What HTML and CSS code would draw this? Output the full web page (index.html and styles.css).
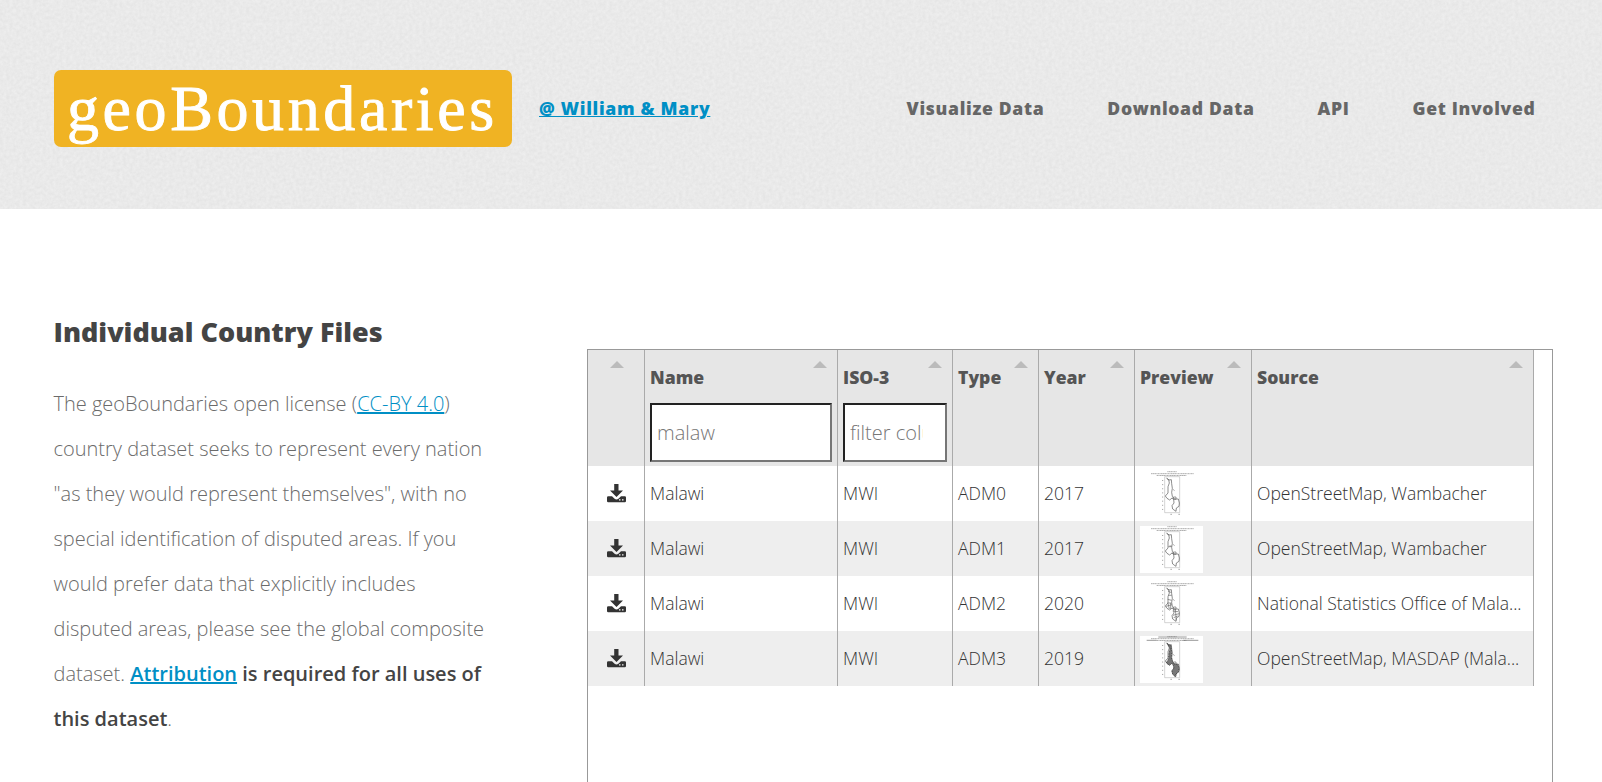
FILE: index.html
```
<!DOCTYPE html>
<html lang="en">
<head>
<meta charset="utf-8">
<title>geoBoundaries</title>
<link rel="stylesheet" href="styles.css">
</head>
<body>
<svg class="defs" aria-hidden="true">
  <symbol id="download" viewBox="0 0 19 19">
    <path d="M7.2 0h4.3v6.6H16L9.5 13 3 6.600h4.200z"/>
    <path fill-rule="evenodd" d="M1.200 12.200H5l2.600 2.600q1.900 1.500 3.800 0l2.600-2.600h3.800q1.200 0 1.200 1.200v3.600q0 1.200-1.200 1.200H1.200Q0 18.200 0 17v-3.600q0-1.200 1.200-1.200zM12 15.200v1.300h1.500v-1.300zM15 15.200v1.300h1.500v-1.300z"/>
  </symbol>
  <symbol id="malawi" viewBox="0 0 189 141">
    <rect width="189" height="141" fill="#fff"/>
    <g fill="none" stroke="#888" stroke-width="2">
      <path d="M82 2H110" stroke-dasharray="4 1"/>
      <path d="M33 8H161M50 13.500H140" stroke-dasharray="5 1 3 1"/>
      <path stroke="#aaa" stroke-width="1.500" d="M74 17H119V125H74z"/>
      <path stroke="#999" stroke-width="3" stroke-dasharray="3 9.400" d="M68 27V125"/>
      <path d="M91 130h5M115 130h5M99 55l5 4"/>
    </g>
    <path fill="none" stroke="#555" stroke-width="2" stroke-linejoin="round" d="M80 22l7 5 7-1 1 12 2 14-2 12 2 12 6 8 12 0 3 12-1 10-8 5-1 10-10-7-2-10 6-8-1-11-5-4-7 6-8-5-5-7 8-9 0-19 4-11-2-10z"/>
    <path fill="none" stroke="#666" stroke-width="2" d="M100 78h8v7h-8z"/>
  </symbol>
</svg>

<header class="site-header">
  <svg class="paper" aria-hidden="true">
    <filter id="grain" x="0" y="0" width="100%" height="100%" color-interpolation-filters="sRGB">
      <feTurbulence type="fractalNoise" baseFrequency="0.3" numOctaves="3" seed="4" stitchTiles="stitch"/>
      <feColorMatrix values="0.055 0 0 0 0.888  0.055 0 0 0 0.888  0.055 0 0 0 0.888  0 0 0 0 1"/>
    </filter>
    <rect width="100%" height="100%" filter="url(#grain)"/>
  </svg>
  <div class="brand">
    <a class="logo">geoBoundaries</a>
    <a class="link org" href="#">@ William &amp; Mary</a>
  </div>
  <nav class="menu">
    <a>Visualize Data</a><a>Download Data</a><a>API</a><a>Get Involved</a>
  </nav>
</header>

<main class="content">
  <section class="intro">
    <h2>Individual Country Files</h2>
    <p>The geoBoundaries open license (<a class="link" href="#">CC-BY 4.0</a>) country dataset seeks to represent every nation "as they would represent themselves", with no special identification of disputed areas. If you would prefer data that explicitly includes disputed areas, please see the global composite dataset. <b><a class="link" href="#">Attribution</a> is required for all uses of this dataset</b>.</p>
  </section>

  <section class="grid">
    <div class="row head">
      <div class="cell center"><i class="sort"></i></div>
      <div class="cell"><span>Name</span><i class="sort"></i><input value="malaw"></div>
      <div class="cell"><span>ISO-3</span><i class="sort"></i><input placeholder="filter column..." class="short"></div>
      <div class="cell"><span>Type</span><i class="sort"></i></div>
      <div class="cell"><span>Year</span><i class="sort"></i></div>
      <div class="cell"><span>Preview</span><i class="sort"></i></div>
      <div class="cell"><span>Source</span><i class="sort"></i></div>
    </div>
    <div class="row">
      <div class="cell center"><svg class="dl"><use href="#download"/></svg></div>
      <div class="cell">Malawi</div><div class="cell">MWI</div><div class="cell">ADM0</div><div class="cell">2017</div>
      <div class="cell"><svg class="map" viewBox="0 0 189 141"><use href="#malawi"/></svg></div>
      <div class="cell">OpenStreetMap, Wambacher</div>
    </div>
    <div class="row">
      <div class="cell center"><svg class="dl"><use href="#download"/></svg></div>
      <div class="cell">Malawi</div><div class="cell">MWI</div><div class="cell">ADM1</div><div class="cell">2017</div>
      <div class="cell"><svg class="map" viewBox="0 0 189 141"><use href="#malawi"/><path class="adm" d="M85 62h10M97 80l5 6M88 60h7"/></svg></div>
      <div class="cell">OpenStreetMap, Wambacher</div>
    </div>
    <div class="row">
      <div class="cell center"><svg class="dl"><use href="#download"/></svg></div>
      <div class="cell">Malawi</div><div class="cell">MWI</div><div class="cell">ADM2</div><div class="cell">2020</div>
      <div class="cell"><svg class="map" viewBox="0 0 189 141"><use href="#malawi"/><path class="adm" d="M84 30l10 5M85 43h10M83 55l12 3M82 66h13M78 76l18-5M84 67l4 17M92 66v18M98 90l16 2M99 103l18-5M101 110l12-5M106 84l3 34"/></svg></div>
      <div class="cell">National Statistics Office of Mala...</div>
    </div>
    <div class="row">
      <div class="cell center"><svg class="dl"><use href="#download"/></svg></div>
      <div class="cell">Malawi</div><div class="cell">MWI</div><div class="cell">ADM3</div><div class="cell">2019</div>
      <div class="cell"><svg class="map" viewBox="0 0 189 141"><use href="#malawi"/><path class="dense" d="M82 23l11 6 2 20-1 16 4 12 4 7 12 2 3 12-2 11-8 5-1 8-8-7-2-10 6-9-3-11-5-2-5 5-10-7 7-13 1-18 3-12z"/><path class="adm" d="M55 3h85M20 13h30M130 13h45"/></svg></div>
      <div class="cell">OpenStreetMap, MASDAP (Mala...</div>
    </div>
  </section>
</main>
</body>
</html>
```
FILE: styles.css
```
* { box-sizing: border-box; }
body {
  margin: 0;
  height: 782px;
  overflow: hidden;
  background: #fff;
  color: #6b6b6b;
  font: 300 20px/45px "Open Sans", sans-serif;
}
.defs { display: none; }
.link { color: #008fc5; text-decoration: underline; }

.site-header {
  position: relative;
  display: flex;
  justify-content: space-between;
  align-items: center;
  height: 209px;
  padding: 0 66.5px 0 54px;
  background: #e9e9e9;
}
.paper { position: absolute; inset: 0; width: 100%; height: 100%; }
.brand, .menu { position: relative; display: flex; align-items: center; margin-top: 8px; }
.brand { gap: 27px; }
.logo {
  width: 458px;
  height: 77px;
  padding-left: 13px;
  border-radius: 7px;
  background: #f0b323;
  color: #fff;
  font: 400 64px/77px "Liberation Serif", serif;
  letter-spacing: 3.6px;
  white-space: nowrap;
  -webkit-text-stroke: 0.9px #fff;
}
.org, .menu a { font-size: 17.6px; font-weight: 800; letter-spacing: 0.7px; white-space: nowrap; }
.menu { gap: 63px; color: #666; }
.menu a { letter-spacing: 0.66px; }

.content { display: flex; align-items: flex-start; }
.intro { width: 587px; flex: none; padding: 100px 95px 0 53.5px; }
.intro h2 { margin: 0 0 26px; color: #444; font-size: 27px; font-weight: 800; line-height: 46px; }
.intro p { margin: 0; }
.intro .link { text-decoration-thickness: 2px; }
.intro b { color: #444; font-weight: 600; }

.grid {
  width: 966px;
  height: 433px;
  margin-top: 140px;
  border: 1px solid #999;
  border-bottom: 0;
  background: #fff;
}
.row {
  display: grid;
  grid-template-columns: 57px 193px 115px 86px 96px 117px 282px;
  width: 946px;
  height: 55px;
  color: #333;
  font-size: 17.55px;
  line-height: 55px;
}
.row:nth-child(odd) { background: #eee; }
.row.head { height: 116px; background: #e6e6e6; color: #555; font-size: 17.6px; font-weight: 800; }
.cell { position: relative; padding: 0 5px; border-right: 1px solid #aaa; overflow: hidden; white-space: nowrap; }
.center { display: flex; justify-content: center; align-items: center; }
.head span { display: block; height: 53px; }
.sort {
  position: absolute;
  top: 11px;
  right: 10px;
  border: 7px solid transparent;
  border-top: 0;
  border-bottom-color: #bbb;
}
.center .sort { right: 20px; }
.head input {
  display: block;
  width: 182px;
  height: 59px;
  padding: 0 5px;
  border: 2px solid;
  border-color: #222 #767676 #767676 #222;
  background: #fff;
  color: #777;
  font: 300 20px "Open Sans", sans-serif;
}
.head input.short { width: 104px; padding-right: 22px; }
.head input::placeholder { color: #777; opacity: 1; }
.dl { width: 19px; height: 19px; fill: #333; }
.map { display: block; width: 63px; height: 47px; margin-top: 5px; }
.adm { fill: none; stroke: #666; stroke-width: 2; }
.dense { fill: #777; stroke: #444; stroke-width: 3; stroke-dasharray: 3 2; }
```
